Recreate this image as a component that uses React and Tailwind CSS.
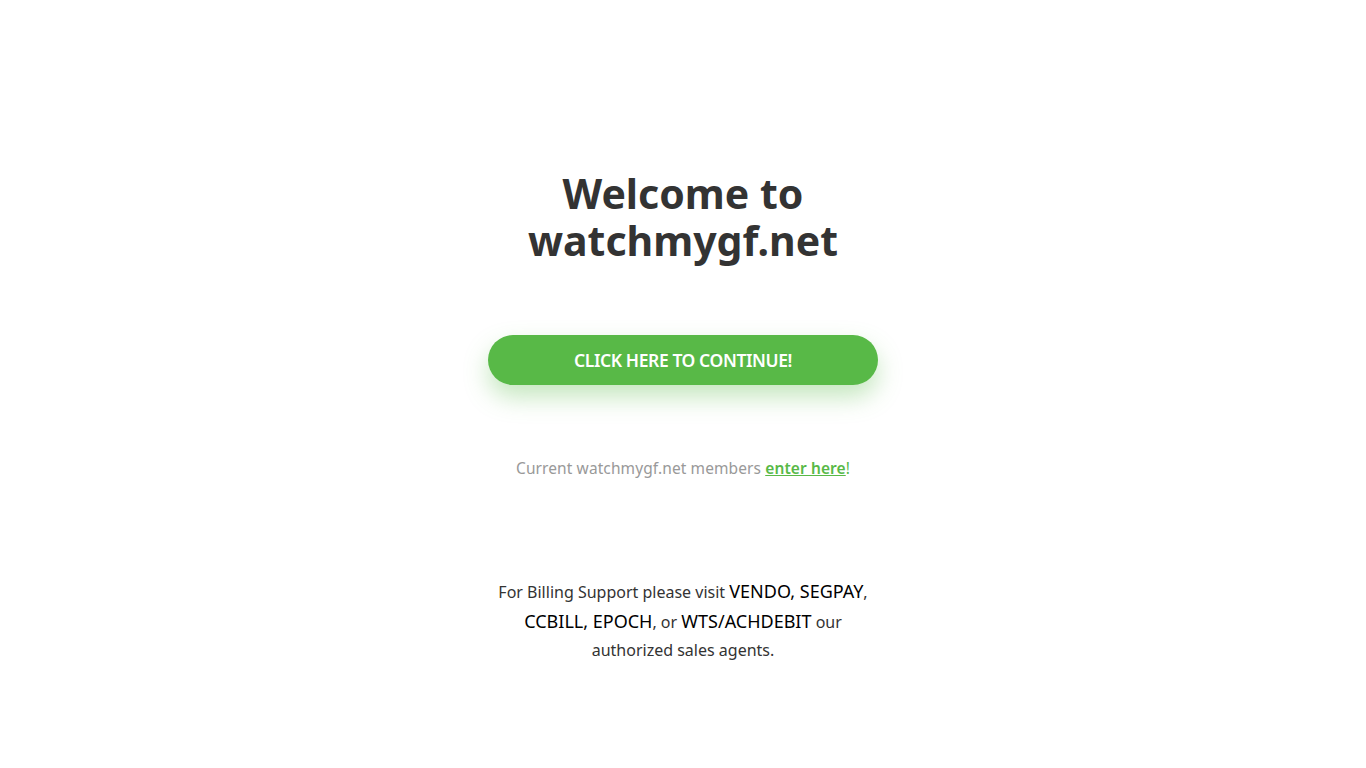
export default function App() {
  return (
    <div className="min-h-screen bg-white flex flex-col items-center font-['Noto_Sans',sans-serif] text-center">
      <h1 className="mt-[170px] text-[41px] leading-[47px] font-bold text-[#333]">
        Welcome to
        <br />
        watchmygf.net
      </h1>
      <a
        href="#"
        className="mt-[71px] w-[390px] h-[50px] rounded-full bg-[#58b947] text-white text-[17.5px] font-semibold tracking-[-0.4px] flex items-center justify-center shadow-[0_12px_25px_rgba(88,185,71,0.35)]"
      >
        CLICK HERE TO CONTINUE!
      </a>
      <p className="mt-[72px] text-[15.5px] tracking-[0.1px] text-[#999]">
        Current watchmygf.net members{' '}
        <a href="#" className="text-[#58b947] font-semibold underline">enter here</a>
        <span className="text-[#58b947]">!</span>
      </p>
      <p className="mt-[97px] w-[390px] text-[16px] leading-[28.5px] text-[#333]">
        For Billing Support please visit <span className="text-[18px] text-black">VENDO, SEGPAY</span>, <span className="text-[18px] text-black">CCBILL, EPOCH</span>, or <span className="text-[18px] text-black">WTS/ACHDEBIT</span> our authorized sales agents.
      </p>
    </div>
  );
}
